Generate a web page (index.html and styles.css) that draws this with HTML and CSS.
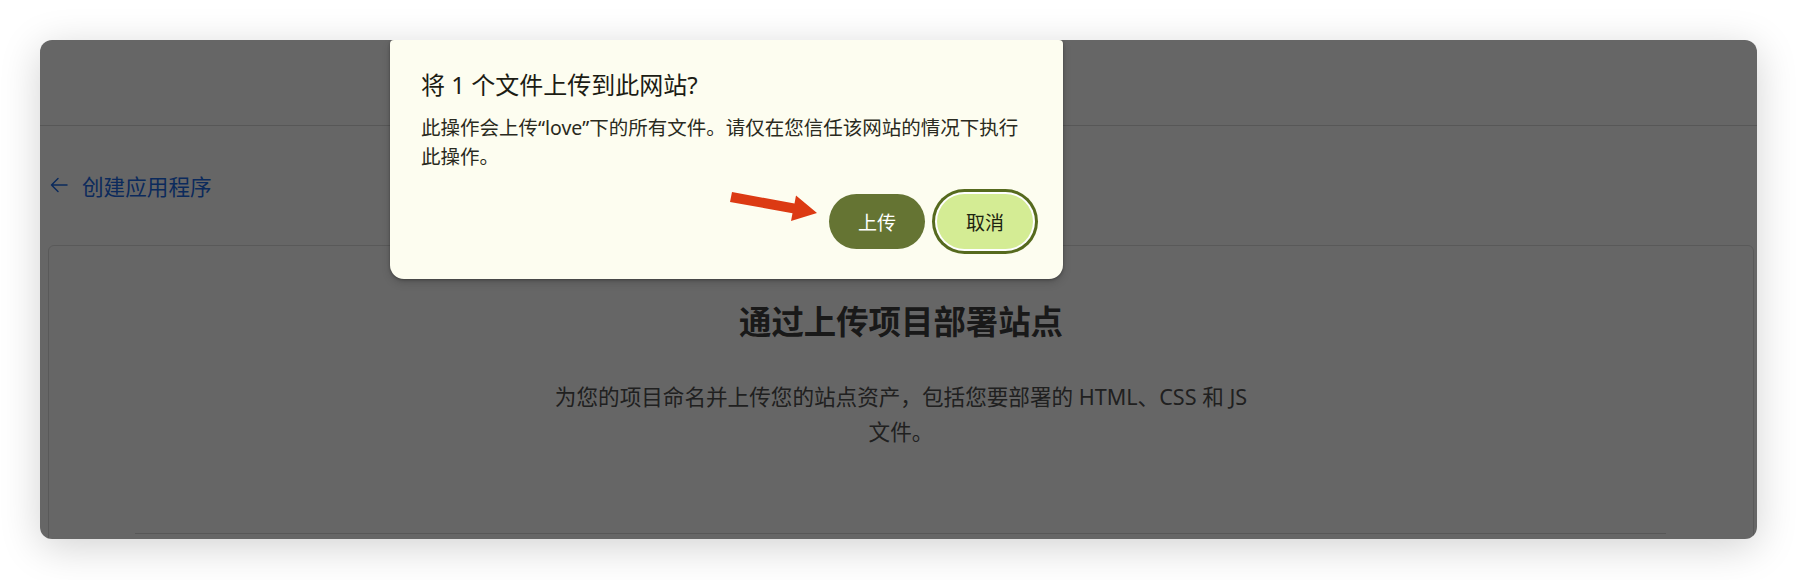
FILE: index.html
```html
<!DOCTYPE html>
<html lang="zh-CN">

<head>
    <meta charset="UTF-8">
    <meta name="viewport" content="width=device-width, initial-scale=1.0">
    <title>创建应用程序</title>
    <link rel="stylesheet" href="styles.css">
</head>

<body>
    <div class="window">
        <header class="topbar"></header>

        <main class="content">
            <a class="back-link" href="#">
                <svg width="18" height="16" viewBox="0 0 18 16" fill="none" stroke="currentColor" stroke-width="1.5" stroke-linecap="round" stroke-linejoin="round">
                    <path d="M17 8H1.5M8 1.5L1.5 8L8 14.5" />
                </svg>
                <span>创建应用程序</span>
            </a>

            <section class="card">
                <h1>通过上传项目部署站点</h1>
                <p>为您的项目命名并上传您的站点资产，包括您要部署的 HTML、CSS 和 JS 文件。</p>
                <div class="dropzone"></div>
            </section>
        </main>

        <div class="scrim"></div>

        <div class="prompt" role="dialog">
            <h2>将 1 个文件上传到此网站?</h2>
            <p>此操作会上传“love”下的所有文件。请仅在您信任该网站的情况下执行此操作。</p>
            <div class="prompt-actions">
                <button class="btn btn-primary">上传</button>
                <button class="btn btn-tonal is-focused">取消</button>
            </div>
            <!-- red pointer drawn over the dialog -->
            <svg class="pointer" width="97" height="37" viewBox="0 0 97 37">
                <polygon points="7,4.1 69.5,15.4 71,7.6 92,25 66,33.1 67.5,25.2 5,13.9" fill="#dc3a13" />
            </svg>
        </div>
    </div>
</body>

</html>
```

FILE: styles.css
```css
body {
    margin: 0;
    background: #fff;
    font-family: "Noto Sans", "Noto Sans CJK SC", sans-serif;
}

.window {
    position: relative;
    height: 499px;
    margin: 40px 41px 41px 40px;
    background: #fff;
    border-radius: 12px;
    overflow: hidden;
    box-shadow: 0 8px 40px rgba(0, 0, 0, 0.18);
}

.topbar {
    height: 85px;
    border-bottom: 1px solid #dadada;
}

.content {
    padding: 44px 3px 0 8px;
}

.back-link {
    display: flex;
    align-items: center;
    gap: 14px;
    height: 30px;
    margin: 0 0 45px 2px;
    color: #1c6ae6;
    font-size: 21.6px;
    text-decoration: none;
}

.card {
    border: 1px solid #dedede;
    border-radius: 6px;
    padding: 54px 0 0;
    text-align: center;
}

.card h1 {
    margin: 0;
    font-size: 32.4px;
    line-height: 42px;
    font-weight: 700;
    color: #404040;
}

.card p {
    max-width: 710px;
    margin: 37px auto 0;
    font-size: 21.6px;
    line-height: 35px;
    color: #505050;
}

.dropzone {
    height: 200px;
    margin: 84px 87px 0 86px;
    border-top: 1px solid #dadada;
}

.scrim {
    position: absolute;
    inset: 0;
    background: rgba(0, 0, 0, 0.6);
}

.prompt {
    position: absolute;
    top: 0;
    left: 350px;
    width: 673px;
    box-sizing: border-box;
    padding: 29px 30px 30px 31px;
    background: #fdfdf0;
    border-radius: 4px 4px 14px 14px;
    box-shadow: 0 1px 3px rgba(0, 0, 0, 0.3), 0 4px 8px rgba(0, 0, 0, 0.15);
    color: #1c1c14;
}

.prompt h2 {
    margin: 0;
    font-size: 24px;
    line-height: 32px;
    font-weight: 400;
}

.prompt p {
    max-width: 600px;
    margin: 12px 0 0;
    font-size: 19.5px;
    line-height: 29px;
    color: #2a2a20;
}

.prompt-actions {
    display: flex;
    justify-content: flex-end;
    gap: 12px;
    margin-top: 23px;
}

.btn {
    width: 96px;
    height: 55px;
    border: none;
    border-radius: 28px;
    font-family: inherit;
    font-size: 19px;
    cursor: pointer;
}

.btn-primary {
    background: #657433;
    color: #fff;
}

.btn-tonal {
    background: #d4ec94;
    color: #1d2410;
}

.btn-tonal.is-focused {
    box-shadow: 0 0 0 2px #fff, 0 0 0 5px #566a1e;
}

.pointer {
    position: absolute;
    left: 335px;
    top: 148px;
}
```
